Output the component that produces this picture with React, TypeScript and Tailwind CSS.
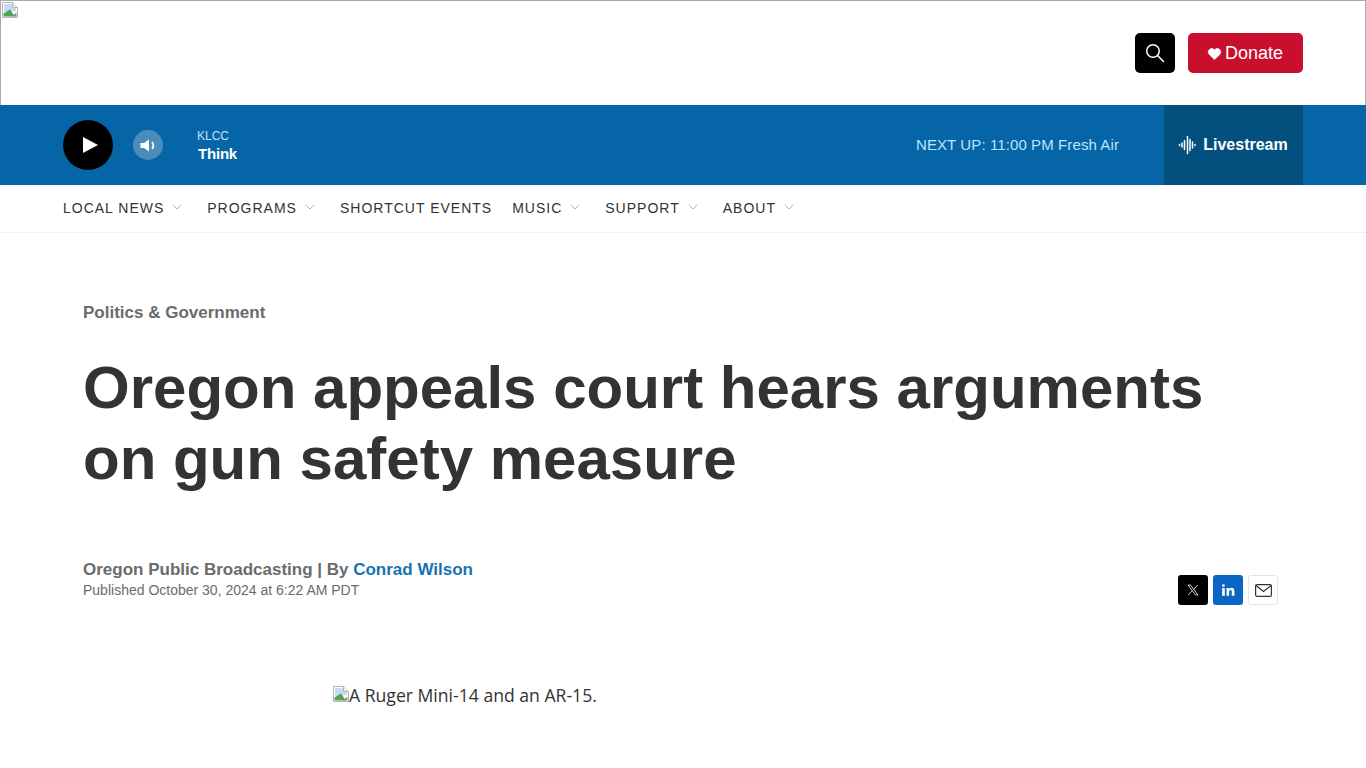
import { ChevronDown, Heart } from "lucide-react";

const navItems = [
  { label: "LOCAL NEWS", menu: true },
  { label: "PROGRAMS", menu: true },
  { label: "SHORTCUT EVENTS", menu: false },
  { label: "MUSIC", menu: true },
  { label: "SUPPORT", menu: true },
  { label: "ABOUT", menu: true },
];

const BrokenImage = () => (
  <svg width="16" height="16" viewBox="0 0 16 16" className="shrink-0">
    <path d="M0.500 0.500H10.500L15.500 5.500V15.500H0.500Z" fill="#fff" stroke="#b5b5b5" />
    <path d="M10.500 0.500V5.500H15.500" fill="#ececec" stroke="#b5b5b5" />
    <path d="M2 2H10V6H14V9L2 10Z" fill="#c9d8f6" />
    <path d="M1.500 14.500V11.500L8 7.500L13 14.500Z" fill="#4ca64c" />
    <path d="M10 14.500L14.500 10.500V14.500Z" fill="#8a8a8a" />
  </svg>
);

const Waveform = () => (
  <svg width="20" height="20" viewBox="0 0 20 20" stroke="white" strokeWidth="1.500" strokeLinecap="round">
    <path d="M1.500 9.500V10.500M4 8V12M6.500 5.500V14.500M9.500 1.500V18.500M12 4.500V15.500M14.500 7V13M17 9.500V10.500" />
  </svg>
);

const XLogo = () => (
  <svg width="12" height="12" viewBox="0 0 24 24" fill="none" stroke="white" strokeWidth="1.600">
    <path d="M2 2L17 22H22L7 2Z" />
    <path d="M21.500 2L13.500 10.500M10.500 13.500L2.500 22" />
  </svg>
);

const LinkedIn = () => (
  <svg width="14" height="14" viewBox="0 0 24 24" fill="white">
    <path d="M2 8.500H6.500V22H2ZM4.250 2A2.400 2.400 0 1 1 4.250 6.800A2.400 2.400 0 0 1 4.250 2ZM9.500 8.500H13.800V10.400C14.500 9.200 16 8.200 18 8.200C22 8.200 23 10.800 23 14.500V22H18.500V15.300C18.500 13.500 18.200 12.200 16.400 12.200C14.600 12.200 14 13.500 14 15.300V22H9.500Z" />
  </svg>
);

export default function App() {
  return (
    <div className="h-[768px] overflow-hidden bg-white font-['Liberation_Sans',Arial,sans-serif]">
      <header className="h-[105px] border border-b-0 border-[#a9a9a9] flex justify-between pr-[62px]">
        <div className="p-px">
          <BrokenImage />
        </div>
        <div className="flex items-center gap-[13px]">
          <button className="w-10 h-10 rounded-[5px] bg-black flex items-center justify-center">
            <svg width="20" height="20" viewBox="0 0 20 20" fill="none" stroke="white" strokeWidth="1.500" strokeLinecap="round">
              <circle cx="8" cy="8" r="6.250" />
              <path d="M12.500 12.500L18.500 18.500" />
            </svg>
          </button>
          <button className="w-[115px] h-10 rounded-[5px] bg-[#c8102e] flex items-center justify-center gap-[3px] pr-px text-white text-[18px]">
            <Heart size={15} fill="white" strokeWidth={1} />
            Donate
          </button>
        </div>
      </header>

      <section className="h-20 bg-[#0565a6] flex items-center px-[63px]">
        <button className="w-[50px] h-[50px] rounded-full bg-black flex items-center justify-center">
          <svg width="15" height="16" viewBox="0 0 15 16" className="ml-[5px]">
            <path d="M0 0L15 8L0 16Z" fill="white" />
          </svg>
        </button>
        <button className="ml-5 w-[30px] h-[30px] rounded-full bg-[#4a8cbc] flex items-center justify-center">
          <svg width="16" height="13" viewBox="0 0 16 13" fill="none">
            <path d="M0.500 4H4L9 0.500V12.500L4 9H0.500Z" fill="white" />
            <path d="M12 3C13.500 5 13.500 8 12 10" stroke="white" strokeWidth="1.700" />
          </svg>
        </button>
        <div className="ml-[34px] flex flex-col">
          <span className="text-[12px] leading-[14px] mt-[2px] text-[#bfe3fb]">KLCC</span>
          <span className="text-[15px] leading-[20px] mt-px ml-px tracking-[-0.2px] font-bold text-white">Think</span>
        </div>
        <div className="ml-auto text-[15px] tracking-[0.1px] text-[#bfe3fb] mr-[45px]">NEXT UP: 11:00 PM Fresh Air</div>
        <div className="w-[139px] h-full bg-[#03507f] flex items-center justify-center gap-[5px] pr-px text-white font-bold text-[16px]">
          <Waveform />
          Livestream
        </div>
      </section>

      <nav className="h-12 border-b border-[#f0f0f0] flex items-center pl-[63px] gap-5 text-[14px] tracking-[1px] text-[#333]">
        {navItems.map((item) => (
          <span key={item.label} className="flex items-center">
            {item.label}
            {item.menu && <ChevronDown size={16} strokeWidth={1} className="ml-[5px] mr-[2px] mb-[3px] text-[#888]" />}
          </span>
        ))}
      </nav>

      <main className="pl-[83px] pr-[88px]">
        <div className="mt-[69px] text-[17px] leading-[22px] font-bold text-[#6b6b6b]">Politics &amp; Government</div>
        <h1 className="mt-[28px] text-[60px] leading-[71px] font-bold text-[#333]">
          Oregon appeals court hears arguments
          <br />
          on gun safety measure
        </h1>
        <div className="mt-[59px] flex items-center justify-between">
          <div>
            <div className="text-[17px] leading-[22px] font-bold text-[#6b6b6b]">
              Oregon Public Broadcasting | By <span className="text-[#1772b0]">Conrad Wilson</span>
            </div>
            <div className="text-[14px] leading-[18px] text-[#6b6b6b]">Published October 30, 2024 at 6:22 AM PDT</div>
          </div>
          <div className="flex gap-[5px] mt-[22px]">
            <span className="w-[30px] h-[30px] rounded-[3px] bg-black flex items-center justify-center"><XLogo /></span>
            <span className="w-[30px] h-[30px] rounded-[3px] bg-[#0a66c2] flex items-center justify-center"><LinkedIn /></span>
            <span className="w-[30px] h-[30px] rounded-[3px] border border-[#e5e5e5] flex items-center justify-center">
              <svg width="17" height="13" viewBox="0 0 17 13" fill="none" stroke="#333" strokeWidth="1.200">
                <rect x="0.600" y="0.600" width="15.800" height="11.800" rx="1.500" />
                <path d="M1 1.500L8.500 7.500L16 1.500" />
              </svg>
            </span>
          </div>
        </div>
        <div className="mt-[77px] ml-[250px] flex items-center text-[17.600px] leading-[26px] text-[#333] font-['Open_Sans','Noto_Sans',sans-serif]">
          <span className="-mt-[3px]">
            <BrokenImage />
          </span>
          A Ruger Mini-14 and an AR-15.
        </div>
      </main>
    </div>
  );
}
